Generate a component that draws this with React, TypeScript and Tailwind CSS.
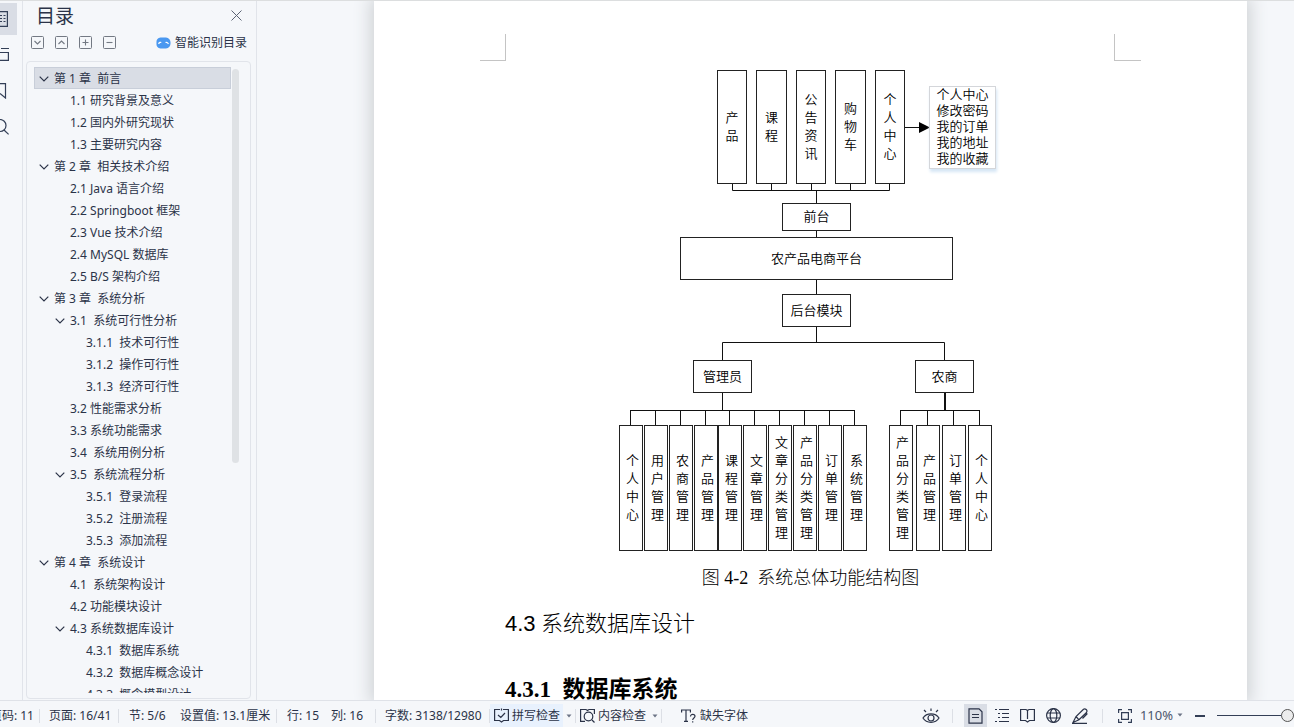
import type { ReactNode } from "react";

const UI_FONT = "font-['Noto_Sans','Noto_Sans_CJK_SC',sans-serif]";

type TocItem = { level: 1 | 2 | 3; text: string; open?: boolean };

const toc: TocItem[] = [
  { level: 1, text: "第 1 章  前言", open: true },
  { level: 2, text: "1.1 研究背景及意义" },
  { level: 2, text: "1.2 国内外研究现状" },
  { level: 2, text: "1.3 主要研究内容" },
  { level: 1, text: "第 2 章  相关技术介绍", open: true },
  { level: 2, text: "2.1 Java 语言介绍" },
  { level: 2, text: "2.2 Springboot 框架" },
  { level: 2, text: "2.3 Vue 技术介绍" },
  { level: 2, text: "2.4 MySQL 数据库" },
  { level: 2, text: "2.5 B/S 架构介绍" },
  { level: 1, text: "第 3 章  系统分析", open: true },
  { level: 2, text: "3.1  系统可行性分析", open: true },
  { level: 3, text: "3.1.1  技术可行性" },
  { level: 3, text: "3.1.2  操作可行性" },
  { level: 3, text: "3.1.3  经济可行性" },
  { level: 2, text: "3.2 性能需求分析" },
  { level: 2, text: "3.3 系统功能需求" },
  { level: 2, text: "3.4  系统用例分析" },
  { level: 2, text: "3.5  系统流程分析", open: true },
  { level: 3, text: "3.5.1  登录流程" },
  { level: 3, text: "3.5.2  注册流程" },
  { level: 3, text: "3.5.3  添加流程" },
  { level: 1, text: "第 4 章  系统设计", open: true },
  { level: 2, text: "4.1  系统架构设计" },
  { level: 2, text: "4.2 功能模块设计" },
  { level: 2, text: "4.3 系统数据库设计", open: true },
  { level: 3, text: "4.3.1  数据库系统" },
  { level: 3, text: "4.3.2  数据库概念设计" },
  { level: 3, text: "4.3.3  概念模型设计" },
];

const indent = { 1: "pl-[5px]", 2: "pl-[21px]", 3: "pl-[37px]" };

function Icon({ w = 16, h = 16, children }: { w?: number; h?: number; children: ReactNode }) {
  return (
    <svg width={w} height={h} viewBox={`0 0 ${w} ${h}`} fill="none" stroke="currentColor" strokeWidth="1.2" className="shrink-0" aria-hidden="true">
      {children}
    </svg>
  );
}

function Rail() {
  return (
    <nav aria-label="导航窗格" className="flex w-[23px] shrink-0 flex-col items-start overflow-hidden border-r border-[#e1e4ea] pt-[2px] text-[#333f57]">
      <button aria-label="目录" className="mb-[2px] flex h-8 w-[17px] justify-start bg-[#d9dde5] pt-2">
        <Icon w={10} h={16}>
          <path d="M0 .6H7.4V15.4H0M2 4.5H0M3.5 4.5H5.5M2 7.5H0M3.5 7.5H5.5M2 10.5H0M3.5 10.5H5.5" />
        </Icon>
      </button>
      <button aria-label="缩略图" className="flex h-9 w-[18px] items-center">
        <Icon w={10} h={16}>
          <path d="M1 1.5H9M0 5.5H8.4V13.4H0" />
        </Icon>
      </button>
      <button aria-label="书签" className="flex h-9 w-[18px] items-center">
        <Icon w={10} h={16}>
          <path d="M0 .6H5.5V15L0 10.5" />
        </Icon>
      </button>
      <button aria-label="查找" className="flex h-9 w-[18px] items-center">
        <Icon w={10} h={16}>
          <circle cx="0" cy="6.5" r="6" />
          <path d="M4 11L8.6 15.4" />
        </Icon>
      </button>
    </nav>
  );
}

function BoxButton({ label, d }: { label: string; d: string }) {
  return (
    <button aria-label={label} className="text-[#737983]">
      <Icon w={13} h={13}>
        <rect x=".5" y=".5" width="12" height="12" rx="1" strokeWidth="1" />
        <path d={d} strokeWidth="1.1" />
      </Icon>
    </button>
  );
}

function Sidebar() {
  return (
    <aside className="flex w-[234px] shrink-0 flex-col border-r border-[#e1e4ea] text-[#2b3348]">
      <div className="flex h-[29px] items-center justify-between pr-[14px] pl-[13px]">
        <h2 className="text-[19px] leading-7">目录</h2>
        <button aria-label="关闭" className="text-[#5c6475]">
          <Icon w={11} h={11}>
            <path d="M.5 .5L10.5 10.5M10.5 .5L.5 10.5" strokeWidth="1" />
          </Icon>
        </button>
      </div>
      <div className="flex h-[25px] items-center gap-[11px] pr-[9px] pl-2">
        <BoxButton label="展开" d="M3.5 5L6.5 8L9.5 5" />
        <BoxButton label="收起" d="M3.5 8L6.5 5L9.5 8" />
        <BoxButton label="增加级别" d="M3.5 6.5H9.5M6.5 3.5V9.5" />
        <BoxButton label="减少级别" d="M3.5 6.5H9.5" />
        <button className="ml-auto flex items-center gap-1 text-xs">
          <svg width="15" height="12" viewBox="0 0 15 12" aria-hidden="true">
            <path d="M4.500 .5H10A5 5 0 0 1 14.500 6A5 5 0 0 1 10 11.500H4.500A5 5 0 0 1 .5 6A5 5 0 0 1 4.500 .5Z" fill="#4a98f0" />
            <path d="M2.500 6.800Q4 4.600 5.300 5.600M9.500 5.600Q11 4.600 12.500 6.800" stroke="#fff" strokeWidth="1.200" fill="none" />
          </svg>
          智能识别目录
        </button>
      </div>
      <div className="mt-[6px] mr-[5px] mb-px ml-[3px] flex min-h-0 flex-1 rounded-sm border border-[#e1e4ea] pt-[5px] pb-[5px] pl-[7px]">
        <ul className="min-w-0 flex-1 overflow-hidden">
          {toc.map((item, i) => (
            <li key={item.text}>
              <button
                className={`flex h-[22px] w-full items-center gap-[5px] pt-[2px] text-left text-xs whitespace-pre ${indent[item.level]} ${
                  i === 0 ? "bg-[#d9dde5] inset-ring inset-ring-[#c8ced9]" : ""
                }`}
              >
                <span className="flex w-[10px] shrink-0">
                  {item.open && (
                    <Icon w={10} h={6}>
                      <path d="M.7 .7L5 5L9.300 .7" />
                    </Icon>
                  )}
                </span>
                {item.text}
              </button>
            </li>
          ))}
        </ul>
        <div className="mt-[2px] mr-[11px] ml-px h-[63%] w-[7px] rounded-full bg-[#dfe2e5]" />
      </div>
    </aside>
  );
}

type NodeBox = { text: string; x: number; y: number; w: number; h: number };

const frontNodes: NodeBox[] = [
  { text: "产品", x: 99, y: 0, w: 30, h: 114 },
  { text: "课程", x: 138, y: 0, w: 31, h: 114 },
  { text: "公告资讯", x: 178, y: 0, w: 30, h: 114 },
  { text: "购物车", x: 217, y: 0, w: 31, h: 114 },
  { text: "个人中心", x: 257, y: 0, w: 30, h: 114 },
];

const levelNodes: NodeBox[] = [
  { text: "前台", x: 164, y: 133, w: 69, h: 28 },
  { text: "农产品电商平台", x: 62, y: 167, w: 273, h: 43 },
  { text: "后台模块", x: 164, y: 224, w: 69, h: 33 },
  { text: "管理员", x: 75, y: 290, w: 59, h: 33 },
  { text: "农商", x: 297, y: 290, w: 59, h: 33 },
];

const leafNodes: NodeBox[] = [
  ["个人中心", 1],
  ["用户管理", 26],
  ["农商管理", 51],
  ["产品管理", 76],
  ["课程管理", 100],
  ["文章管理", 125],
  ["文章分类管理", 150],
  ["产品分类管理", 175],
  ["订单管理", 200],
  ["系统管理", 225],
  ["产品分类管理", 271],
  ["产品管理", 298],
  ["订单管理", 324],
  ["个人中心", 350],
].map(([text, x]) => ({ text: text as string, x: x as number, y: 355, w: 24, h: 126 }));

function DiagramNode({ node, vertical, shift }: { node: NodeBox; vertical?: boolean; shift?: boolean }) {
  return (
    <div
      className={`absolute flex items-center justify-center border border-[#222] bg-white text-center text-[13px] font-[350] ${shift ? "pl-[3px]" : ""}`}
      style={{ left: node.x, top: node.y, width: node.w, height: node.h }}
    >
      <span className={vertical ? "w-[13px] leading-[18px] break-all" : "leading-[18px] whitespace-nowrap"}>{node.text}</span>
    </div>
  );
}

function Diagram() {
  const drops = leafNodes.map((n) => `M${n.x + 11}.5 340V355`).join("");
  return (
    <div className="relative mx-auto h-[482px] w-[385px] text-black">
      <svg className="absolute inset-0" width="385" height="482" fill="none" stroke="#111" strokeWidth="1" aria-hidden="true">
        <path d="M114.500 114V120.500H271.500V114M153.500 114V120M193.500 114V120M232.500 114V120M198.500 120V133M198.500 161V167M198.500 210V224M198.500 257V272M104.500 290V272.500H326.500V290" />
        <path d={`M104.500 323V340M12 340.500H237M282 340.500H362${drops}`} />
        <path d="M327 323V340" strokeWidth="2" />
        <path d="M287 57.500H303" />
        <path d="M301 52L312 57.500L301 63Z" fill="#000" stroke="none" />
      </svg>
      {frontNodes.map((n) => (
        <DiagramNode key={n.x} node={n} vertical />
      ))}
      {levelNodes.map((n) => (
        <DiagramNode key={n.text} node={n} />
      ))}
      {leafNodes.map((n) => (
        <DiagramNode key={n.x} node={n} vertical shift />
      ))}
      <div className="absolute top-[16px] left-[311px] h-[83px] w-[67px] border border-[#d4d6da] bg-white text-center text-[13px] leading-4 font-[350] shadow-[1px_3px_3px_#d5e6f5]">
        {["个人中心", "修改密码", "我的订单", "我的地址", "我的收藏"].map((t) => (
          <p key={t}>{t}</p>
        ))}
      </div>
    </div>
  );
}

function Document() {
  return (
    <main className="min-w-0 flex-1 overflow-hidden pr-[47px] pl-[117px]">
      <article className="h-full overflow-hidden bg-white font-['Liberation_Serif','Noto_Sans_CJK_SC',serif] text-black shadow-[0_0_16px_4px_#d0d3d6]">
        <div className="flex justify-between px-[106px] pt-[33px]">
          <span className="h-[27px] w-[26px] border-r border-b border-[#c4c4c4]" />
          <span className="h-[27px] w-[27px] border-b border-l border-[#c4c4c4]" />
        </div>
        <div className="px-[131px] pt-[9px]">
          <figure>
            <Diagram />
            <figcaption className="pt-3 text-center text-lg leading-7 font-light whitespace-pre">图 4-2  系统总体功能结构图</figcaption>
          </figure>
          <h2 className="mt-4 text-[22px] leading-8 font-light">
            <span className="font-['Liberation_Sans',sans-serif] font-normal">4.3</span> 系统数据库设计
          </h2>
          <h3 className="mt-[34px] text-[23px] leading-8 font-bold whitespace-pre">4.3.1  数据库系统</h3>
        </div>
      </article>
    </main>
  );
}

function Sep() {
  return <span className="h-[14px] w-px shrink-0 bg-[#dcdfe5]" />;
}

function Caret() {
  return (
    <svg width="6" height="4" viewBox="0 0 6 4" className="shrink-0" aria-hidden="true">
      <path d="M.5 .5H5.500L3 3.500Z" fill="#6c7486" />
    </svg>
  );
}

function StatusBar() {
  return (
    <footer className="flex h-[27px] shrink-0 items-center border-t border-[#dfe2e8] pt-[3px] text-xs whitespace-nowrap text-[#2b3348]">
      <div className="flex w-[39px] justify-end overflow-hidden pr-[5px]">
        <span>页码: 11</span>
      </div>
      <Sep />
      <span className="w-[78px] pl-[9px]">页面: 16/41</span>
      <Sep />
      <span className="w-[61px] pl-[10px]">节: 5/6</span>
      <span className="w-[96px]">设置值: 13.1厘米</span>
      <Sep />
      <span className="w-[54px] pl-[10px]">行: 15</span>
      <span className="w-[44px]">列: 16</span>
      <Sep />
      <span className="w-[113px] pl-[9px]">字数: 3138/12980</span>
      <Sep />
      <button className="flex h-[23px] w-[73px] items-center gap-[3px] bg-[#e8f1fd] pl-[4px]">
        <Icon w={15} h={15}>
          <path d="M6 1.500H.6V12.500H5.500L7.500 14L9.500 12.500H14.400V1.500H9M7.500 .5V2.500M4 7L6.800 9.500L11 5" />
        </Icon>
        拼写检查
      </button>
      <button aria-label="拼写检查选项" className="flex w-3 justify-center">
        <Caret />
      </button>
      <Sep />
      <button className="flex w-[73px] items-center gap-[3px] pl-1">
        <Icon w={15} h={15}>
          <path d="M5 13.400H.6V1.500H6L7.500 2.500L9 1.500H14.400V6M12 12L14.500 14.500" />
          <circle cx="8.500" cy="8.500" r="4.300" />
        </Icon>
        内容检查
      </button>
      <button aria-label="内容检查选项" className="flex w-3 justify-center">
        <Caret />
      </button>
      <Sep />
      <button className="ml-[19px] flex items-center gap-1">
        <Icon w={15} h={14}>
          <path d="M.6 3.500V1H9.400V3.500M5 1V12.400M3 12.400H7M9.500 7.500C9.500 4.500 14 4.800 14 7.300C14 9 11.700 9 11.700 11M11.700 12.200V13.600" />
        </Icon>
        缺失字体
      </button>

      <div className="ml-auto flex items-center">
        <button aria-label="护眼模式" className="mr-3">
          <Icon w={18} h={16}>
            <path d="M1 10C4.500 4.500 13.500 4.500 17 10C13.500 15.800 4.500 15.800 1 10ZM9 .5V3M2 2L4 4M16 2L14 4" />
            <circle cx="9" cy="10" r="3" />
          </Icon>
        </button>
        <Sep />
        <button aria-label="页面视图" className="ml-[11px] flex h-6 w-[23px] items-center justify-center bg-[#d9dde5]">
          <Icon w={15} h={16}>
            <path d="M1 .8H11L14 3.800V15.200H1ZM4 6.500H11M4 9.500H11" />
          </Icon>
        </button>
        <button aria-label="大纲" className="ml-2">
          <Icon w={15} h={15}>
            <path d="M0 1.500H2M4 1.500H14M3 5.500H5M7 5.500H14M3 9.500H5M7 9.500H14M0 13.500H2M4 13.500H14" />
          </Icon>
        </button>
        <button aria-label="阅读版式" className="ml-[10px]">
          <Icon w={15} h={15}>
            <path d="M.6 1.500H6L7.500 2.500L9 1.500H14.400V12.500H9.500L7.500 14L5.500 12.500H.6ZM7.500 2.500V11" />
          </Icon>
        </button>
        <button aria-label="Web版式" className="ml-[11px]">
          <Icon w={15} h={15}>
            <circle cx="7.500" cy="7.500" r="6.900" />
            <ellipse cx="7.500" cy="7.500" rx="3.300" ry="6.900" />
            <path d="M1 5H14M1 10H14" />
          </Icon>
        </button>
        <button aria-label="写作模式" className="ml-[11px]">
          <Icon w={16} h={16}>
            <path d="M1 14.500L4 8.500L11.500 1.200Q12.800 .2 14.200 1.500T14.500 4.500L7 11.800ZM4 8.500L7 11.800M15.400 5.500L10.500 10.500M0 15.400H15" />
          </Icon>
        </button>
        <span className="w-[14px]" />
        <Sep />
        <button aria-label="最佳显示比例" className="ml-[15px] text-[#333f57]">
          <Icon w={14} h={14}>
            <path d="M.6 4V.6H4M10 .6H13.400V4M13.400 10V13.400H10M4 13.400H.6V10M3.600 3.600H10.400V10.400H3.600Z" />
          </Icon>
        </button>
        <button className="ml-2 flex items-center gap-1 text-[13px] text-[#4c566c]">
          110%
          <Caret />
        </button>
        <button aria-label="缩小" className="ml-3 h-[2px] w-[10px] bg-[#333f57]" />
        <input
          type="range"
          aria-label="显示比例"
          min={10}
          max={110}
          defaultValue={110}
          className="ml-3 h-[13px] w-[77px] appearance-none bg-transparent [&::-webkit-slider-runnable-track]:h-px [&::-webkit-slider-runnable-track]:bg-[#333f57] [&::-webkit-slider-thumb]:-mt-[6px] [&::-webkit-slider-thumb]:size-[13px] [&::-webkit-slider-thumb]:appearance-none [&::-webkit-slider-thumb]:rounded-full [&::-webkit-slider-thumb]:border [&::-webkit-slider-thumb]:border-[#555] [&::-webkit-slider-thumb]:bg-[#ececec]"
        />
      </div>
    </footer>
  );
}

export default function App() {
  return (
    <div className={`flex h-screen flex-col overflow-hidden border-t border-[#dcdedf] bg-[#f5f7fa] ${UI_FONT}`}>
      <div className="flex min-h-0 flex-1">
        <Rail />
        <Sidebar />
        <Document />
      </div>
      <StatusBar />
    </div>
  );
}
